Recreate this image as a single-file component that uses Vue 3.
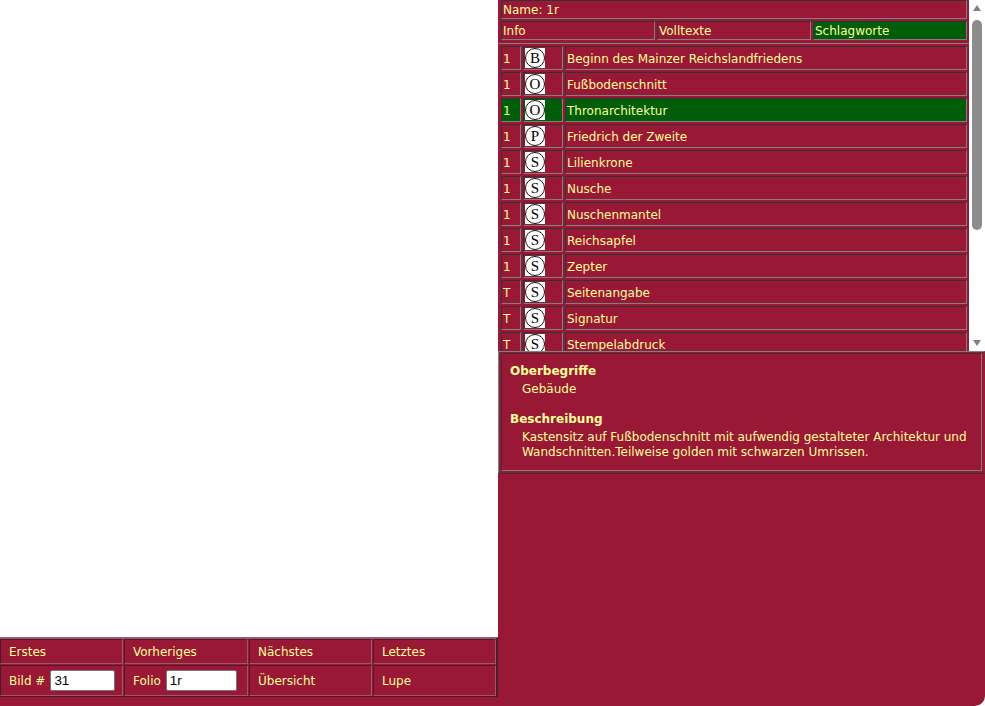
<script setup>
const rows = [
  ['1', 'B', 'Beginn des Mainzer Reichslandfriedens'],
  ['1', 'O', 'Fußbodenschnitt'],
  ['1', 'O', 'Thronarchitektur', true],
  ['1', 'P', 'Friedrich der Zweite'],
  ['1', 'S', 'Lilienkrone'],
  ['1', 'S', 'Nusche'],
  ['1', 'S', 'Nuschenmantel'],
  ['1', 'S', 'Reichsapfel'],
  ['1', 'S', 'Zepter'],
  ['T', 'S', 'Seitenangabe'],
  ['T', 'S', 'Signatur'],
  ['T', 'S', 'Stempelabdruck'],
]
</script>

<template>
  <div class="page">
    <div class="left">
      <div class="viewer"></div>
      <div class="nav">
        <div class="cell">Erstes</div>
        <div class="cell">Vorheriges</div>
        <div class="cell">Nächstes</div>
        <div class="cell">Letztes</div>
        <div class="cell">Bild #<input class="field" value="31" /></div>
        <div class="cell">Folio<input class="field wide" value="1r" /></div>
        <div class="cell">Übersicht</div>
        <div class="cell">Lupe</div>
      </div>
    </div>
    <div class="right">
      <div class="top">
        <div class="content">
          <div class="head">
            <div class="name">Name: 1r</div>
            <div class="tabs">
              <div class="tab">Info</div>
              <div class="tab">Volltexte</div>
              <div class="tab active">Schlagworte</div>
            </div>
          </div>
          <div class="list">
            <div v-for="r in rows" :key="r[2]" class="row" :class="{ active: r[3] }">
              <div class="c num">{{ r[0] }}</div>
              <div class="c ic"><span class="sq"><span class="badge">{{ r[1] }}</span></span></div>
              <div class="c label">{{ r[2] }}</div>
            </div>
          </div>
        </div>
        <div class="scrollbar">
          <span class="up"></span>
          <span class="thumb"></span>
          <span class="down"></span>
        </div>
      </div>
      <div class="desc">
        <div class="inner">
          <div class="h">Oberbegriffe</div>
          <div class="p">Gebäude</div>
          <div class="h second">Beschreibung</div>
          <div class="p">Kastensitz auf Fußbodenschnitt mit aufwendig gestalteter Architektur und Wandschnitten.Teilweise golden mit schwarzen Umrissen.</div>
        </div>
      </div>
    </div>
  </div>
</template>

<style>
html, body { margin: 0; background: #fff; }
</style>

<style scoped>
.page {
  width: 985px;
  height: 706px;
  display: flex;
  overflow: hidden;
  background: #981836;
  border-bottom-right-radius: 10px;
  color: #ffff99;
  font: 12px "DejaVu Sans", sans-serif;
}
.left { width: 498px; flex: none; display: flex; flex-direction: column; }
.viewer { height: 637px; background: #fff; }
.nav {
  height: 60px;
  box-sizing: border-box;
  display: grid;
  grid-template-columns: 123px 124px 123px 123px;
  grid-template-rows: 25px 31px;
  gap: 1px;
  border-top: 2px solid #a0566c;
  border-bottom: 1px solid #4a1c2a;
  border-right: 2px solid #4a1c2a;
}
.cell {
  display: flex;
  align-items: center;
  padding-left: 8px;
  border: 1px solid;
  border-color: #4a1c2a #a0566c #a0566c #4a1c2a;
}
.field {
  width: 65px;
  height: 21px;
  box-sizing: border-box;
  margin-left: 5px;
  padding: 0 3px;
  border: 1px solid #767676;
  border-radius: 2px;
  background: #fff;
  color: #000;
  font: 13.33px "Liberation Sans", sans-serif;
}
.field.wide { width: 71px; }
.right { flex: 1; min-width: 0; }
.top { height: 351px; display: flex; overflow: hidden; }
.content { width: 471px; flex: none; overflow: hidden; }
.head { height: 44px; box-sizing: border-box; padding: 0 2px 0 3px; border-bottom: 1px solid #808080; }
.name, .tab, .c {
  box-sizing: border-box;
  border: 1px solid;
  border-color: #333 #808080 #808080 #333;
}
.name { height: 19px; line-height: 18px; padding-left: 1px; }
.tabs { display: flex; gap: 2px; margin-top: 2px; }
.tab { flex: 1; height: 19px; line-height: 18px; padding-left: 1px; }
.tab.active, .row.active .c { background: #005e0a; }
.list { padding: 2px 2px 0 3px; display: flex; flex-direction: column; gap: 2px; }
.row { display: flex; gap: 2px; height: 24px; flex: none; }
.c { height: 24px; line-height: 25px; }
.num { width: 20px; padding-left: 1px; }
.ic { width: 40px; padding: 1px 0 0 1px; }
.label { flex: 1; padding-left: 1px; }
.sq { display: block; width: 20px; height: 20px; background: #fff; }
.badge {
  display: block;
  width: 20px;
  height: 20px;
  box-sizing: border-box;
  border: 1px solid #111;
  border-radius: 50%;
  color: #000;
  font: 15px/18px "Liberation Serif", serif;
  text-align: center;
}
.scrollbar {
  flex: 1;
  background: #fff;
  position: relative;
  display: flex;
  flex-direction: column;
  align-items: center;
}
.up, .down { position: absolute; width: 0; height: 0; border-left: 4px solid transparent; border-right: 4px solid transparent; }
.up { top: 5px; border-bottom: 6px solid #808080; }
.down { bottom: 5px; border-top: 6px solid #808080; }
.thumb { margin-top: 20px; width: 10px; height: 210px; border-radius: 5px; background: #8c8c8c; }
.desc {
  box-sizing: border-box;
  height: 123px;
  padding: 1px 2px 2px 2px;
  border: 1px solid;
  border-color: #808080 transparent #333 #808080;
}
.inner {
  height: 100%;
  box-sizing: border-box;
  padding: 6px 10px 0 8px;
  border: 1px solid;
  border-color: #333 #808080 #808080 #333;
}
.h { font-weight: 700; line-height: 22px; }
.second { margin-top: 11px; }
.p { padding-left: 12px; line-height: 15px; }
</style>
